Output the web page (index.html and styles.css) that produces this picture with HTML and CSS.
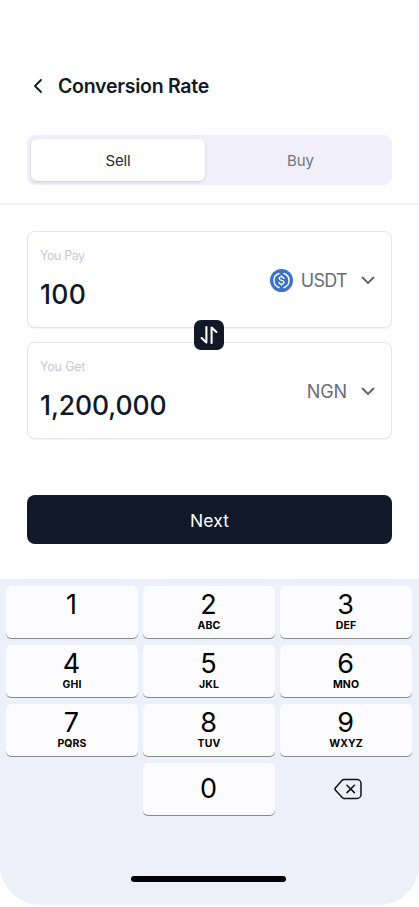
FILE: index.html
```html
<!DOCTYPE html>
<html lang="en">
<head>
<meta charset="utf-8">
<meta name="viewport" content="width=device-width, initial-scale=1">
<title>Conversion Rate</title>
<link rel="stylesheet" href="styles.css">
</head>
<body>
<main class="screen">
  <header class="header">
    <svg class="back" viewBox="0 0 10 16" width="10" height="16"><path d="M8 2 2 8l6 6"/></svg>
    <h1 class="title">Conversion Rate</h1>
  </header>
  <div class="tabs">
    <div class="tab tab-active"><span>Sell</span></div>
    <div class="tab"><span>Buy</span></div>
  </div>
  <hr class="divider">
  <div class="exchange">
    <section class="card">
      <div class="entry"><div class="label">You Pay</div><div class="amount">100</div></div>
      <div class="currency">
        <svg class="coin" viewBox="0 0 24 24" width="23" height="23">
          <circle cx="12" cy="12" r="12" fill="#3e73c4"/>
          <g fill="none" stroke="#fff" stroke-linecap="round">
            <path d="M9.400 4.700a7.700 7.700 0 0 0 0 14.600M14.600 4.700a7.700 7.700 0 0 1 0 14.600" stroke-width="1.4"/>
            <path d="M14.400 9.800c0-1.100-1-1.700-2.400-1.700s-2.400.7-2.400 1.800c0 2.800 5 1.200 5 4 0 1.200-1.100 1.900-2.600 1.900s-2.600-.7-2.600-1.900M12 6.800v1.300M12 15.800v1.400" stroke-width="1.3"/>
          </g>
        </svg>
        <span class="code">USDT</span>
        <svg class="chevron" viewBox="0 0 14 9" width="14" height="9"><path d="m1.500 1.500 5.500 5.500 5.500-5.500"/></svg>
      </div>
    </section>
    <div class="swap">
      <svg viewBox="0 0 30 30" width="30" height="30"><path d="M12.400 7v15.500L7.600 18M17.600 23V7.500l4.800 4.500"/></svg>
    </div>
    <section class="card">
      <div class="entry"><div class="label label-get">You Get</div><div class="amount amount-large">1,200,000</div></div>
      <div class="currency">
        <span class="code code-ngn">NGN</span>
        <svg class="chevron" viewBox="0 0 14 9" width="14" height="9"><path d="m1.500 1.500 5.500 5.500 5.500-5.500"/></svg>
      </div>
    </section>
  </div>
  <div class="next"><span>Next</span></div>
  <div class="keyboard">
    <div class="keys">
      <div class="key"><span class="digit">1</span></div>
      <div class="key"><span class="digit">2</span><span class="letters">ABC</span></div>
      <div class="key"><span class="digit">3</span><span class="letters">DEF</span></div>
      <div class="key"><span class="digit">4</span><span class="letters">GHI</span></div>
      <div class="key"><span class="digit">5</span><span class="letters">JKL</span></div>
      <div class="key"><span class="digit">6</span><span class="letters">MNO</span></div>
      <div class="key"><span class="digit">7</span><span class="letters">PQRS</span></div>
      <div class="key"><span class="digit">8</span><span class="letters">TUV</span></div>
      <div class="key"><span class="digit">9</span><span class="letters">WXYZ</span></div>
      <div class="key key-zero"><span class="digit">0</span></div>
      <div class="erase">
        <svg viewBox="0 0 28 22" width="28" height="22"><path d="M10 1.500h13a4 4 0 0 1 4 4v11a4 4 0 0 1-4 4H10.500c-1 0-1.700-.4-2.300-1L1.800 12.600c-1-1-1-2.200 0-3.200l6.100-6.800c.6-.7 1.200-1.100 2.100-1.100ZM13 7.200l7.400 7.400M20.400 7.200 13 14.600"/></svg>
      </div>
    </div>
    <div class="home"></div>
  </div>
</main>
</body>
</html>
```
FILE: styles.css
```css
* { box-sizing: border-box; }
body {
  margin: 0;
  background: #fff;
  color: #111827;
  font-family: Inter, "Liberation Sans", sans-serif;
}
svg { display: block; fill: none; stroke-linecap: round; stroke-linejoin: round; }
.screen { display: flex; flex-direction: column; width: 419px; height: 907px; overflow: hidden; }
.header { display: flex; align-items: center; height: 32px; margin: 70px 27px 0 33px; }
.back { stroke: #111827; stroke-width: 1.8; }
.title { margin: 0 0 0 15px; font-size: 19.5px; font-weight: 560; line-height: 32px; letter-spacing: -0.25px; white-space: nowrap; }
.tabs { display: flex; height: 50px; margin: 33px 27px 0; padding: 4px; border-radius: 8px; background: #f0effb; }
.tab { flex: 1; display: flex; align-items: center; justify-content: center; color: #737584; font-size: 15px; letter-spacing: -0.1px; }
.tab-active { flex: 0 0 174px; margin-right: 8px; border-radius: 6px; background: #fff; box-shadow: 0 1px 3px rgba(17,24,39,.16); color: #252c3c; }
.divider { width: 100%; height: 2px; margin: 18px 0 0; border: 0; background: #f2f2f4; }
.exchange { position: relative; display: flex; flex-direction: column; gap: 14px; margin: 26px 27px 0; }
.card { display: flex; justify-content: space-between; align-items: center; height: 97px; padding: 0 16px 0 12px; border: 1px solid #e5e5e8; border-radius: 8px; box-shadow: 0 1px 2px rgba(17,24,39,.06); }
.label { color: #cac8d8; font-size: 12.5px; line-height: 18px; letter-spacing: -0.45px; }
.label-get { letter-spacing: -0.2px; }
.amount { margin: 12px 0 1px; font-size: 26.5px; font-weight: 500; line-height: 34px; letter-spacing: 0.3px; }
.amount-large { letter-spacing: -0.1px; }
.currency { display: flex; align-items: center; padding-top: 2px; }
.coin { margin-right: 8px; }
.code { color: #686c79; font-size: 18px; line-height: 24px; letter-spacing: -0.7px; }
.code-ngn { letter-spacing: -0.1px; }
.chevron { margin-left: 14px; stroke: #606470; stroke-width: 1.9; }
.swap { position: absolute; left: 167px; top: 89px; width: 30px; height: 30px; border-radius: 7px; background: #111827; }
.swap svg { stroke: #fff; stroke-width: 2.1; }
.next { display: flex; align-items: center; justify-content: center; height: 49px; margin: 56px 27px 0; padding-top: 1px; border-radius: 8px; background: #111827; color: #fff; font-size: 17.5px; letter-spacing: 0.1px; }
.keyboard { height: 326px; margin-top: 35px; padding: 6.5px 7px 0 6px; border-radius: 0 0 40px 40px; background: #efeffb; color: #000; }
.keys { display: grid; grid-template-columns: repeat(3, 132px); grid-auto-rows: 52px; gap: 7.2px 5px; }
.key { display: flex; flex-direction: column; align-items: center; border-radius: 5px; background: #fcfcfe; box-shadow: 0 1px 0 #898a8d; }
.digit { height: 34px; padding-right: 1px; font-size: 27px; font-weight: 380; line-height: 37px; }
.letters { font-size: 10.5px; font-weight: 650; line-height: 12px; letter-spacing: 0.1px; }
.key-zero { grid-column: 2; justify-content: center; }
.key-zero .digit { line-height: 34px; }
.erase { display: flex; align-items: center; justify-content: center; padding-left: 4px; }
.erase svg { stroke: #111; stroke-width: 1.5; }
.home { width: 155px; height: 6px; margin: 60.5px 0 0 125px; border-radius: 3px; background: #000; }
```
